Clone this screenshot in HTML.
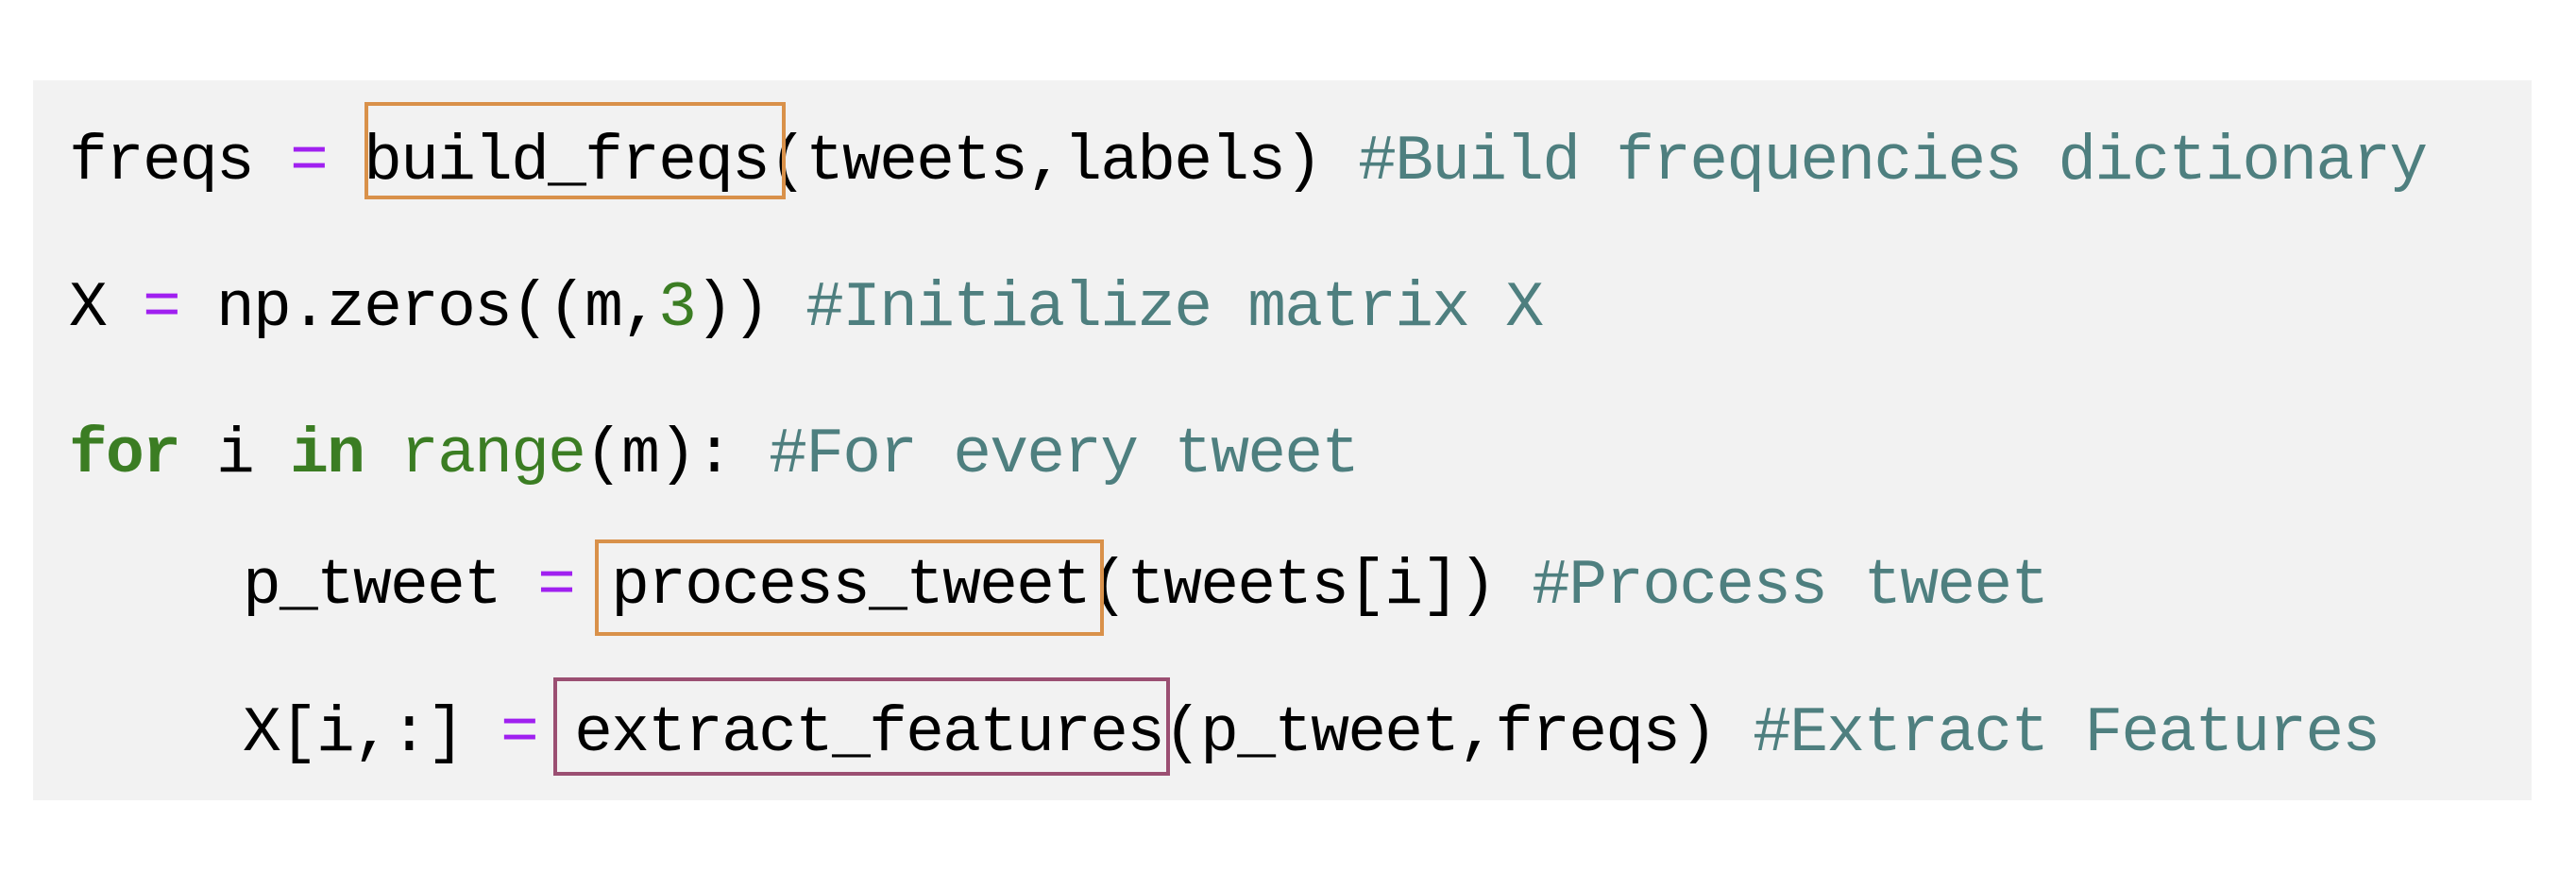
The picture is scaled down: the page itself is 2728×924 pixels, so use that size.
<!DOCTYPE html>
<html><head><meta charset="utf-8"><style>
html,body{margin:0;padding:0;background:#fff;width:2728px;height:924px;overflow:hidden;position:relative}
.bg{position:absolute;left:35px;top:85px;width:2646px;height:762px;background:#f2f2f2}
.l{position:absolute;font-family:"Liberation Mono",monospace;font-size:68px;letter-spacing:-1.8px;line-height:66px;white-space:pre;color:#000}
.k{color:#3b7d23;font-weight:bold}
.g{color:#3b7d23}
.c{color:#4e7f7f}
.p{color:#a020f0}
.b{position:absolute;box-sizing:border-box;border:4px solid #d9914a}
</style></head><body>
<div class="bg"></div>
<div class="l" style="left:73px;top:139px">freqs <span class="p">=</span> build_freqs(tweets,labels) <span class="c">#Build frequencies dictionary</span></div>
<div class="l" style="left:73px;top:294px">X <span class="p">=</span> np.zeros((m,<span class="g">3</span>)) <span class="c">#Initialize matrix X</span></div>
<div class="l" style="left:73px;top:449px"><span class="k">for</span> i <span class="k">in</span> <span class="g">range</span>(m): <span class="c">#For every tweet</span></div>
<div class="l" style="left:257px;top:588px">p_tweet <span class="p">=</span> process_tweet(tweets[i]) <span class="c">#Process tweet</span></div>
<div class="l" style="left:257px;top:744px">X[i,:] <span class="p">=</span> extract_features(p_tweet,freqs) <span class="c">#Extract Features</span></div>
<div class="b" style="left:386px;top:108px;width:446px;height:103px"></div>
<div class="b" style="left:630px;top:571px;width:539px;height:102px"></div>
<div class="b" style="left:586px;top:717px;width:653px;height:104px;border-color:#9b4f72"></div>
</body></html>
